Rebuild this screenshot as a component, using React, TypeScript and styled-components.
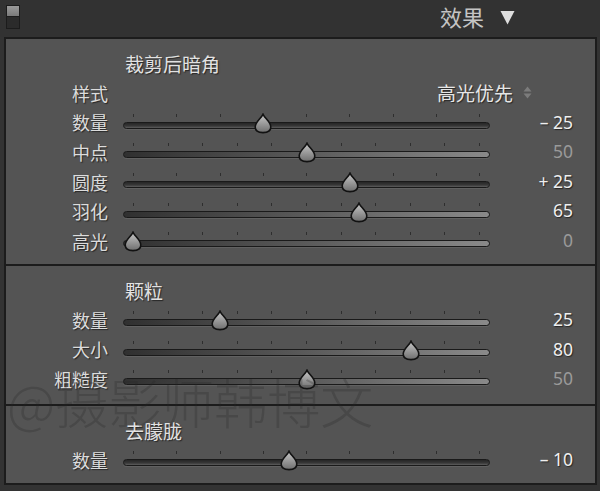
import React from 'react';
import styled, { createGlobalStyle } from 'styled-components';

const GlobalStyle = createGlobalStyle`
  html, body {
    margin: 0;
    padding: 0;
    background: #333333;
  }
  body {
    width: 600px;
    height: 491px;
    overflow: hidden;
    font-family: "Noto Sans CJK SC", "Noto Sans", sans-serif;
  }
`;

const Page = styled.div`
  width: 600px;
  height: 491px;
  background: #333333;
`;

const Header = styled.div`
  height: 37px;
  display: flex;
  align-items: center;
  padding: 0 85px 0 6px;
  box-sizing: border-box;
  background: #323232;
`;

const Toggle = styled.div`
  width: 14px;
  height: 24px;
  box-sizing: border-box;
  border: 1px solid #1c1c1c;
  background: #2b2b2b;
  display: flex;
  flex-direction: column;
  margin-top: -4px;
`;

const ToggleKnob = styled.div`
  height: 10px;
  background: linear-gradient(#9a9a9a, #7a7a7a);
  border-bottom: 1px solid #1c1c1c;
`;

const HeaderTitle = styled.div`
  margin-left: auto;
  font-size: 22px;
  color: #c4c4c4;
  line-height: 1;
  margin-top: -5px;
`;

const Caret = styled.svg`
  margin-left: 16px;
  margin-top: -3px;
`;

const Panel = styled.div`
  position: relative;
  margin: 0 3px 0 4px;
  border: 2px solid #1c1c1c;
  background: #545454;
  overflow: hidden;
`;

const Section = styled.div<{ $pt: number; $h: number }>`
  height: ${(p) => p.$h}px;
  box-sizing: border-box;
  padding-top: ${(p) => p.$pt}px;
  & + & {
    border-top: 2px solid #1c1c1c;
  }
`;

const Title = styled.div`
  height: 30px;
  display: flex;
  align-items: center;
  padding-left: 119px;
  font-size: 19px;
  color: #e2e2e2;
  text-shadow: 1px 1px 1px #262626;
`;

const Row = styled.div`
  height: 29.6px;
  display: grid;
  grid-template-columns: 102px 367px 1fr;
  column-gap: 15px;
  align-items: center;
  padding-right: 22px;
`;

const Label = styled.div`
  text-align: right;
  font-size: 18px;
  line-height: 1;
  color: #dcdcdc;
  text-shadow: 1px 1px 1px #262626;
`;

const Value = styled.div<{ $dim?: boolean }>`
  text-align: right;
  font-family: "Noto Sans", "Open Sans", sans-serif;
  font-size: 17.5px;
  line-height: 1;
  color: ${(p) => (p.$dim ? '#9a9a9a' : '#efefef')};
  text-shadow: ${(p) => (p.$dim ? 'none' : '1px 1px 1px #262626')};
`;

const Select = styled.div`
  grid-column: 2 / 4;
  display: flex;
  align-items: center;
  justify-content: flex-end;
  padding-right: 41px;
  font-size: 19px;
  line-height: 1;
  color: #e6e6e6;
  text-shadow: 1px 1px 1px #262626;
`;

const Arrows = styled.svg`
  margin-left: 10px;
`;

const Slider = styled.div`
  position: relative;
  height: 29px;
  display: flex;
  flex-direction: column;
  justify-content: center;
  margin-top: -2px;
`;

const Ticks = styled.div`
  display: flex;
  justify-content: space-between;
  padding: 0 10px;
  height: 4px;
  margin-bottom: 4px;
`;

const Tick = styled.span`
  width: 1px;
  height: 3px;
  background: #2e2e2e;
`;

const Track = styled.div<{ $bipolar: boolean }>`
  height: 7px;
  box-sizing: border-box;
  border: 1px solid #1a1a1a;
  border-radius: 4px;
  background: ${(p) =>
    p.$bipolar
      ? 'linear-gradient(#262626, #383838 60%, #5e5e5e)'
      : 'linear-gradient(to right, #303030, #5a5a5a 50%, #8a8a8a)'};
  box-shadow: 0 1px 0 rgba(255, 255, 255, 0.08);
`;

const Thumb = styled.svg`
  position: absolute;
  top: 6px;
  margin-left: -9px;
`;

const Watermark = styled.div`
  position: absolute;
  left: 1px;
  top: 336px;
  font-size: 53px;
  font-weight: 300;
  line-height: 1;
  color: rgba(40, 40, 40, 0.26);
  white-space: nowrap;
  pointer-events: none;
`;

type SliderRow = {
  label: string;
  value: number;
  text: string;
  bipolar?: boolean;
  dim?: boolean;
};

const SliderRowView = ({ row }: { row: SliderRow }) => {
  const pos = row.bipolar ? (row.value + 100) / 200 : row.value / 100;
  const count = row.bipolar ? 9 : 11;
  return (
    <Row>
      <Label>{row.label}</Label>
      <Slider>
        <Ticks>
          {Array.from({ length: count }).map((_, i) => (
            <Tick key={i} />
          ))}
        </Ticks>
        <Track $bipolar={!!row.bipolar} />
        <Thumb width="18" height="21" viewBox="0 0 18 21" style={{ left: 10 + pos * 347 }}>
          <path
            d="M9 1.2 C10.5 5 16.8 9 16.8 14 C16.8 18.3 14 19.6 9 19.6 C4 19.6 1.2 18.3 1.2 14 C1.2 9 7.5 5 9 1.2 Z"
            fill="url(#thumbFill)"
            stroke="#121212"
            strokeWidth="1.6"
          />
        </Thumb>
      </Slider>
      <Value $dim={row.dim}>{row.text}</Value>
    </Row>
  );
};

const vignette: SliderRow[] = [
  { label: '数量', value: -25, text: '– 25', bipolar: true },
  { label: '中点', value: 50, text: '50', dim: true },
  { label: '圆度', value: 25, text: '+ 25', bipolar: true },
  { label: '羽化', value: 65, text: '65' },
  { label: '高光', value: 0, text: '0', dim: true },
];

const grain: SliderRow[] = [
  { label: '数量', value: 25, text: '25' },
  { label: '大小', value: 80, text: '80' },
  { label: '粗糙度', value: 50, text: '50', dim: true },
];

const dehaze: SliderRow[] = [{ label: '数量', value: -10, text: '– 10', bipolar: true }];

export default function App() {
  return (
    <Page>
      <GlobalStyle />
      {/* shared gradient for all slider thumbs */}
      <svg width="0" height="0" style={{ position: 'absolute' }}>
        <defs>
          <linearGradient id="thumbFill" x1="0" y1="0" x2="0" y2="1">
            <stop offset="0" stopColor="#c8c8c8" />
            <stop offset="1" stopColor="#6e6e6e" />
          </linearGradient>
        </defs>
      </svg>
      <Header>
        <Toggle>
          <ToggleKnob />
        </Toggle>
        <HeaderTitle>效果</HeaderTitle>
        <Caret width="15" height="15" viewBox="0 0 15 15">
          <path d="M0.5 1 L14.5 1 L7.5 14.5 Z" fill="#dedede" />
        </Caret>
      </Header>
      <Panel>
        <Section $pt={9} $h={225}>
          <Title>裁剪后暗角</Title>
          <Row>
            <Label>样式</Label>
            <Select>
              高光优先
              <Arrows width="9" height="13" viewBox="0 0 9 13">
                <path d="M4.5 0.5 L8.5 5.5 L0.5 5.5 Z" fill="#7c7c7c" />
                <path d="M0.5 7.5 L8.5 7.5 L4.5 12.5 Z" fill="#7c7c7c" />
              </Arrows>
            </Select>
          </Row>
          {vignette.map((r) => (
            <SliderRowView key={r.label} row={r} />
          ))}
        </Section>
        <Section $pt={9} $h={140}>
          <Title>颗粒</Title>
          {grain.map((r) => (
            <SliderRowView key={r.label} row={r} />
          ))}
        </Section>
        <Section $pt={9} $h={79}>
          <Title>去朦胧</Title>
          {dehaze.map((r) => (
            <SliderRowView key={r.label} row={r} />
          ))}
        </Section>
        <Watermark>@摄影师韩博文</Watermark>
      </Panel>
    </Page>
  );
}
